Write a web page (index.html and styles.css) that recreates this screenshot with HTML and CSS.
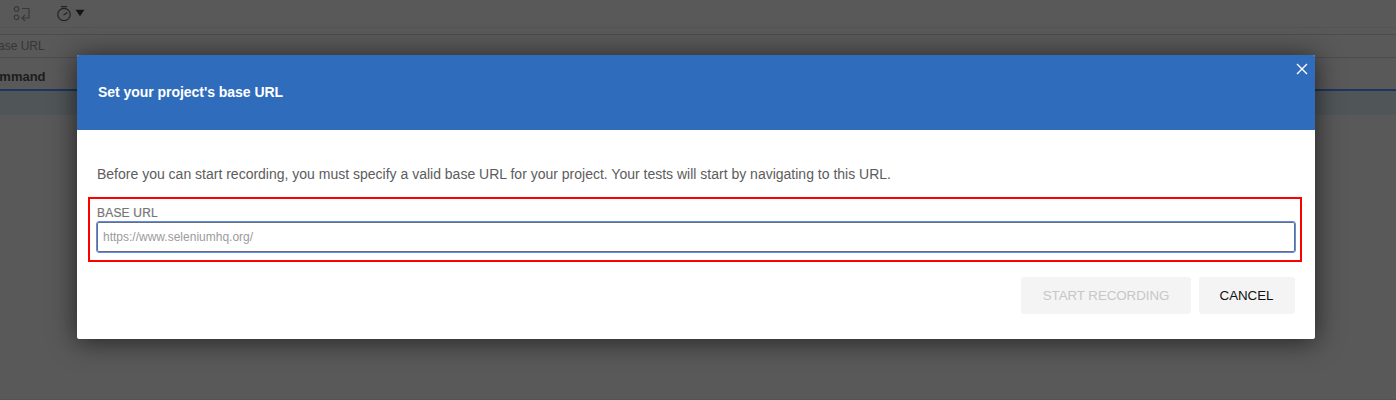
FILE: index.html
```
<!DOCTYPE html>
<html lang="en">
<head>
<meta charset="utf-8">
<title>Set your project's base URL</title>
<link rel="stylesheet" href="styles.css">
</head>
<body>
<div class="editor">
  <div class="toolbar">
    <svg class="icon-step" width="18" height="16" viewBox="0 0 18 16" fill="none" stroke="#393939" stroke-width="1.2"><circle cx="3.5" cy="3" r="2.3"/><circle cx="3.5" cy="11.3" r="2.3"/><path d="M9 2.5h7v9.5H9M12 9l-3 3 3 3"/></svg>
    <svg class="icon-speed" width="16" height="17" viewBox="0 0 16 17" fill="none" stroke="#222" stroke-width="1.2"><circle cx="8" cy="9.5" r="6.2"/><path d="M5 1.6h6M7.5 10l4-2.5"/></svg>
    <svg class="icon-caret" width="10" height="8" viewBox="0 0 10 8"><path d="M0.5 .7h9L5 7.2z" fill="#161616"/></svg>
  </div>
  <div class="divider"></div>
  <div class="url-row">Base URL</div>
  <div class="table-head">Command</div>
  <div class="selected-row"></div>
</div>
<div class="overlay">
  <div class="modal">
    <div class="modal-header">
      <h1 class="modal-title">Set your project's base URL</h1>
      <svg class="close" width="12" height="12" viewBox="0 0 12 12" stroke="#fff" stroke-width="1.4"><path d="M1 1l10 10M11 1L1 11"/></svg>
    </div>
    <div class="modal-body">
      <p class="message">Before you can start recording, you must specify a valid base URL for your project. Your tests will start by navigating to this URL.</p>
      <div class="highlight">
        <label class="field-label" for="url">BASE URL</label>
        <input class="field" id="url" placeholder="https://www.seleniumhq.org/">
      </div>
      <div class="actions">
        <button class="button start" disabled>START RECORDING</button>
        <button class="button cancel">CANCEL</button>
      </div>
    </div>
  </div>
</div>
</body>
</html>
```
FILE: styles.css
```
* { box-sizing: border-box; }
body { margin: 0; height: 400px; overflow: hidden; background: #595959; font-family: "Liberation Sans", Arial, sans-serif; }
.editor { height: 400px; border-bottom: 1px solid #535353; }
.toolbar { height: 27px; display: flex; align-items: flex-start; padding: 6px 0 0 13px; }
.icon-step { margin-right: 25px; }
.icon-speed { margin-top: -1px; }
.icon-caret { margin: 3px 0 0 3px; }
.divider { height: 8px; border-top: 1px solid #545454; border-bottom: 1px solid #4c4c4c; }
.url-row { height: 23px; margin-left: -10px; border-bottom: 1px solid #4c4c4c; color: #363636; font-size: 12px; line-height: 22px; }
.table-head { height: 33px; margin-left: -18px; border-bottom: 2px solid #1f3460; color: #1c1c1c; font-size: 13px; font-weight: bold; line-height: 37px; }
.selected-row { height: 24px; background: #505558; }
.overlay { position: absolute; inset: 0; padding: 55px 81px 61px 77px; }
.modal { height: 284px; border-radius: 2px; background: #fff; overflow: hidden; box-shadow: 0 2px 26px 1px rgba(0,0,0,.58); }
.modal-header { height: 75px; display: flex; justify-content: space-between; padding: 8px 7px 0 21px; background: #2f6cbc; }
.modal-title { margin: 20px 0 0; color: #fff; font-size: 14px; line-height: 18px; font-weight: bold; letter-spacing: -.04px; }
.modal-body { padding: 35px 13px 0 11px; }
.message { margin: 0 0 14px 9px; color: #5c5c5c; font-size: 14px; line-height: 18px; }
.highlight { height: 65px; border: 2px solid #f00; padding: 7px 4px 0 6px; }
.field-label { display: block; height: 15px; margin-left: 1px; color: #757575; font-size: 12px; line-height: 15px; letter-spacing: .2px; -webkit-text-stroke: .2px #757575; }
.field { display: block; width: 100%; height: 32px; padding: 0 6px; border: 1px solid #5c8ef0; border-radius: 3px; box-shadow: inset 0 0 0 1px #686d78; outline: 0; background: #fff; font: 12px "Liberation Sans", Arial, sans-serif; }
.field::placeholder { color: #9b9b9b; opacity: 1; }
.actions { display: flex; justify-content: flex-end; gap: 8px; padding: 15px 7px 0 0; }
.button { height: 37px; padding: 0 0 1px; border: 0; border-radius: 3px; background: #f4f4f4; font: 13.33px "Liberation Sans", Arial, sans-serif; letter-spacing: -.05px; }
.start { width: 170px; color: #c7c7c7; }
.cancel { width: 96px; padding-right: 1px; color: #111; }
```
